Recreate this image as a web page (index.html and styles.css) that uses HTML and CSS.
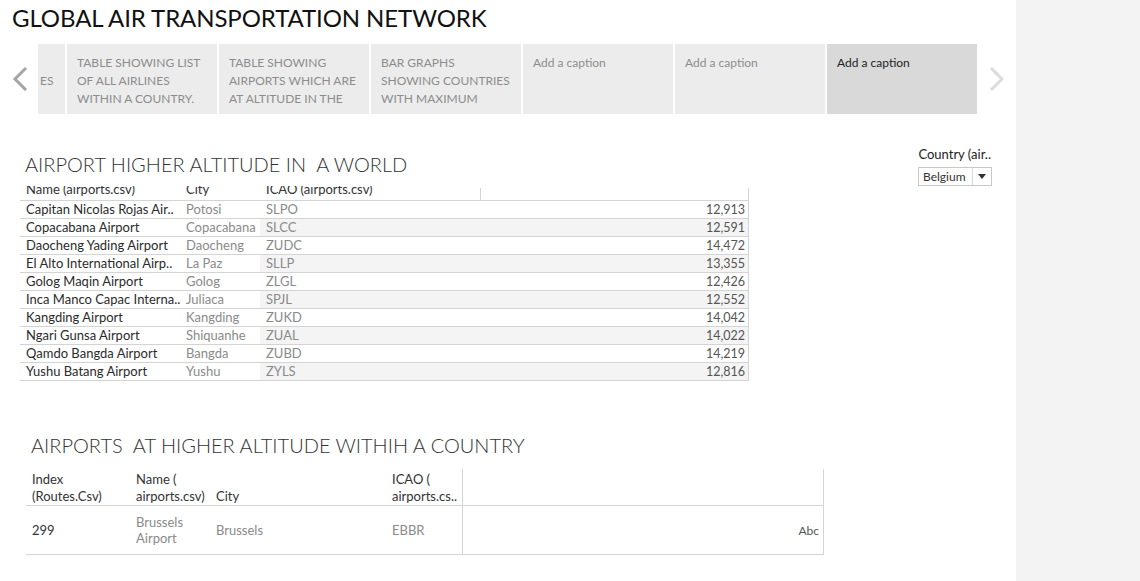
FILE: index.html
```html
<!DOCTYPE html>
<html>
<head>
<meta charset="utf-8">
<link rel="stylesheet" href="styles.css">
</head>
<body>
<div class="page">
  <main class="dash">
    <h1 class="title">GLOBAL AIR TRANSPORTATION NETWORK</h1>
    <div class="story">
      <div class="arrow arrow-left">
        <svg width="16" height="24" viewBox="0 0 16 24"><path d="M14 1 L3 12 L14 23" fill="none" stroke="#a6a6a6" stroke-width="3"/></svg>
      </div>
      <div class="tiles">
        <div class="tile tile-partial"><span class="tile-text">ES</span></div>
        <div class="tile"><span class="tile-text">TABLE SHOWING LIST OF ALL AIRLINES WITHIN A COUNTRY.</span></div>
        <div class="tile"><span class="tile-text">TABLE SHOWING AIRPORTS WHICH ARE AT ALTITUDE IN THE</span></div>
        <div class="tile"><span class="tile-text">BAR GRAPHS SHOWING COUNTRIES WITH MAXIMUM</span></div>
        <div class="tile"><span class="tile-text">Add a caption</span></div>
        <div class="tile"><span class="tile-text">Add a caption</span></div>
        <div class="tile tile-active"><span class="tile-text">Add a caption</span></div>
      </div>
      <div class="arrow arrow-right">
        <svg width="16" height="24" viewBox="0 0 16 24"><path d="M2 1 L13 12 L2 23" fill="none" stroke="#dcdcdc" stroke-width="3"/></svg>
      </div>
    </div>

    <section class="sec1">
      <div class="sec1-head">
        <h2 class="sec-title">AIRPORT HIGHER ALTITUDE IN&nbsp; A WORLD</h2>
        <div class="filter">
          <div class="filter-label">Country (air..</div>
          <div class="select">
            <span class="select-value">Belgium</span>
            <span class="select-btn"><svg width="8" height="5" viewBox="0 0 8 5"><path d="M0 0 L8 0 L4 5 Z" fill="#333"/></svg></span>
          </div>
        </div>
      </div>
      <div class="t1">
        <div class="t1-head">
          <div class="t1-hc"><span>Name (airports.csv)</span></div>
          <div class="t1-hc"><span>City</span></div>
          <div class="t1-hc"><span>ICAO (airports.csv)</span></div>
          <div class="t1-hc t1-hc-last"></div>
        </div>
        <div class="t1-row"><div class="c-name">Capitan Nicolas Rojas Air..</div><div class="c-city">Potosi</div><div class="c-icao">SLPO</div><div class="c-num">12,913</div></div>
        <div class="t1-row alt"><div class="c-name">Copacabana Airport</div><div class="c-city">Copacabana</div><div class="c-icao">SLCC</div><div class="c-num">12,591</div></div>
        <div class="t1-row"><div class="c-name">Daocheng Yading Airport</div><div class="c-city">Daocheng</div><div class="c-icao">ZUDC</div><div class="c-num">14,472</div></div>
        <div class="t1-row alt"><div class="c-name">El Alto International Airp..</div><div class="c-city">La Paz</div><div class="c-icao">SLLP</div><div class="c-num">13,355</div></div>
        <div class="t1-row"><div class="c-name">Golog Maqin Airport</div><div class="c-city">Golog</div><div class="c-icao">ZLGL</div><div class="c-num">12,426</div></div>
        <div class="t1-row alt"><div class="c-name">Inca Manco Capac Interna..</div><div class="c-city">Juliaca</div><div class="c-icao">SPJL</div><div class="c-num">12,552</div></div>
        <div class="t1-row"><div class="c-name">Kangding Airport</div><div class="c-city">Kangding</div><div class="c-icao">ZUKD</div><div class="c-num">14,042</div></div>
        <div class="t1-row alt"><div class="c-name">Ngari Gunsa Airport</div><div class="c-city">Shiquanhe</div><div class="c-icao">ZUAL</div><div class="c-num">14,022</div></div>
        <div class="t1-row"><div class="c-name">Qamdo Bangda Airport</div><div class="c-city">Bangda</div><div class="c-icao">ZUBD</div><div class="c-num">14,219</div></div>
        <div class="t1-row alt"><div class="c-name">Yushu Batang Airport</div><div class="c-city">Yushu</div><div class="c-icao">ZYLS</div><div class="c-num">12,816</div></div>
      </div>
    </section>

    <section class="sec2">
      <h2 class="sec-title sec2-title">AIRPORTS&nbsp; AT HIGHER ALTITUDE WITHIH A COUNTRY</h2>
      <div class="t2">
        <div class="t2-head">
          <div class="t2-hc">Index<br>(Routes.Csv)</div>
          <div class="t2-hc">Name (<br>airports.csv)</div>
          <div class="t2-hc">City</div>
          <div class="t2-hc">ICAO (<br>airports.cs..</div>
          <div class="t2-hc t2-val"></div>
        </div>
        <div class="t2-row">
          <div class="t2-c t2-dark">299</div>
          <div class="t2-c t2-gray">Brussels<br>Airport</div>
          <div class="t2-c t2-gray">Brussels</div>
          <div class="t2-c t2-gray">EBBR</div>
          <div class="t2-c t2-val t2-abc">Abc</div>
        </div>
      </div>
    </section>
  </main>
  <aside class="side"></aside>
</div>
</body>
</html>
```

FILE: styles.css
```css
* { box-sizing: border-box; }
html, body { margin: 0; padding: 0; }
body {
  font-family: "Lato", "Open Sans", sans-serif;
  font-size: 12px;
  color: #333;
  background: #fff;
}
.page {
  display: flex;
  width: 1140px;
  height: 581px;
  overflow: hidden;
}
.dash {
  width: 1016px;
  flex: none;
}
.side {
  flex: 1;
  background: #f3f3f3;
}
.title {
  margin: 0;
  padding: 4px 0 0 12px;
  font-size: 24px;
  line-height: 28px;
  font-weight: 400;
  color: #111;
  letter-spacing: -0.1px;
}
.story {
  display: flex;
  margin-top: 12px;
  height: 70px;
}
.arrow {
  display: flex;
  align-items: center;
  justify-content: center;
  width: 38px;
  height: 70px;
}
.arrow-left { padding-left: 2px; }
.arrow-right { width: 39px; }
.tiles {
  display: flex;
  gap: 2px;
}
.tile {
  width: 150px;
  height: 70px;
  background: #ececec;
  padding: 10px 10px 0 10px;
  overflow: hidden;
  color: #8c8c8c;
  font-size: 12px;
  line-height: 18px;
}
.tile-partial {
  width: 27px;
  padding: 28px 0 0 2px;
}
.tile-active {
  background: #d9d9d9;
  color: #222;
}
.tile-text { display: block; }

.sec1 { margin-top: 32px; }
.sec1-head {
  display: flex;
  justify-content: space-between;
  align-items: flex-start;
  height: 40px;
  padding: 0 24px 0 25px;
}
.sec-title {
  margin: 6px 0 0 0;
  font-size: 20px;
  line-height: 24px;
  font-weight: 300;
  color: #333;
}
.filter {
  display: flex;
  flex-direction: column;
  align-items: flex-end;
}
.filter-label {
  font-size: 13px;
  line-height: 16px;
  color: #222;
  padding-right: 1px;
}
.select {
  display: flex;
  margin-top: 5px;
  width: 74px;
  height: 19px;
  border: 1px solid #c8c8c8;
  background: #fff;
}
.select-value {
  flex: 1;
  padding-left: 4px;
  line-height: 17px;
  color: #333;
}
.select-btn {
  width: 19px;
  border-left: 1px solid #d6d6d6;
  display: flex;
  align-items: center;
  justify-content: center;
}

.t1 {
  margin-left: 20px;
  width: 729px;
  font-size: 13px;
}
.t1-head, .t1-row {
  display: grid;
  grid-template-columns: 160px 80px 220px 269px;
  border-bottom: 1px solid #d4d4d4;
}
.t1-head {
  height: 15px;
  overflow: hidden;
}
.t1-hc {
  height: 14px;
  overflow: hidden;
  padding-left: 6px;
}
.t1-hc span {
  display: block;
  line-height: 18px;
  margin-top: -6px;
  color: #333;
  white-space: nowrap;
}
.t1-hc:nth-child(4) {
  border-left: 1px solid #d4d4d4;
  border-right: 1px solid #d4d4d4;
  margin-top: 2px;
}
.t1-row { height: 18px; line-height: 17px; }
.t1-row > div { padding-left: 6px; white-space: nowrap; overflow: hidden; }
.t1-row.alt .c-icao, .t1-row.alt .c-num { background: #f4f4f4; }
.c-name { color: #2b2b2b; }
.c-city { color: #8a8a8a; }
.c-icao { color: #8a8a8a; }
.c-num {
  text-align: right;
  padding-right: 3px;
  color: #555;
  font-size: 12.5px;
  border-right: 1px solid #d4d4d4;
}

.sec2 { margin-top: 52px; }
.sec2-title { margin: 0; padding-left: 31px; }
.t2 {
  margin: 12px 0 0 26px;
  width: 798px;
  font-size: 13px;
}
.t2-head, .t2-row {
  display: grid;
  grid-template-columns: 104px 80px 176px 76px 362px;
  border-bottom: 1px solid #d4d4d4;
}
.t2-head { height: 37px; }
.t2-hc {
  display: flex;
  align-items: flex-end;
  padding-left: 6px;
  line-height: 17px;
  color: #333;
  white-space: nowrap;
}
.t2-row { height: 49px; }
.t2-c {
  display: flex;
  align-items: center;
  padding-left: 6px;
  line-height: 16px;
}
.t2-val {
  border-left: 1px solid #d4d4d4;
  border-right: 1px solid #d4d4d4;
}
.t2-dark { color: #333; }
.t2-gray { color: #8a8a8a; }
.t2-abc {
  justify-content: flex-end;
  padding-right: 4px;
  color: #555;
  font-size: 12px;
  padding-top: 2px;
}
```
